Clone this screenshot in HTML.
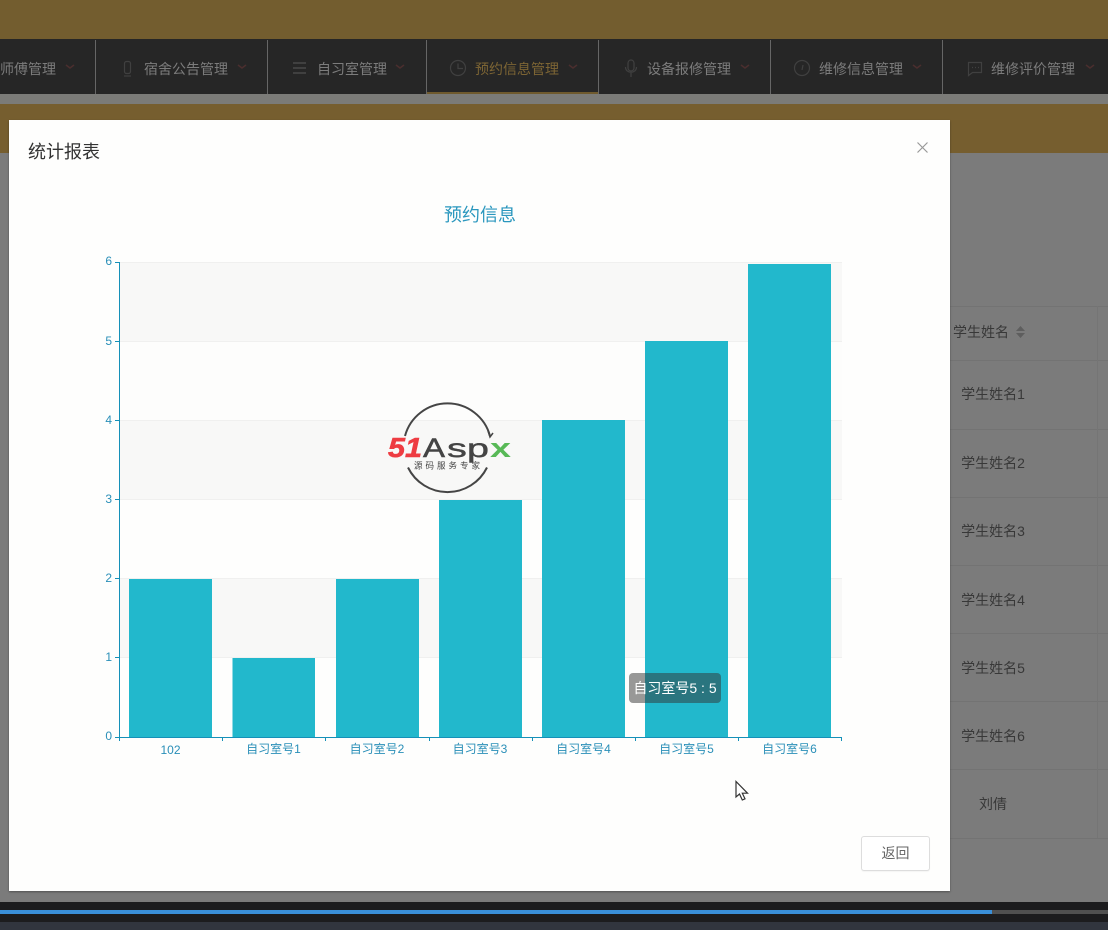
<!DOCTYPE html>
<html lang="zh">
<head>
<meta charset="utf-8">
<title>统计报表</title>
<style>
html,body{margin:0;padding:0;width:1108px;height:930px;overflow:hidden;background:#7b7b7b}
body{position:relative;font-family:"Liberation Sans","Noto Sans CJK SC",sans-serif}
.a{position:absolute}
.t{position:absolute;white-space:nowrap;line-height:20px}
.nav{color:#7c7c7c;font-size:14px;top:59px}
.cell{color:#383838;font-size:14px;left:943px;width:100px;text-align:center}
.hl{position:absolute;left:950px;right:0;height:1px;background:#737373}
</style>
</head>
<body>
<div class="a" style="left:0;top:0;width:1108px;height:39px;background:#735d2f"></div>
<div class="a" style="left:0;top:39px;width:1108px;height:55px;background:#262626"></div>
<div class="a" style="left:0;top:94px;width:1108px;height:10px;background:#7b7b78"></div>
<div class="a" style="left:0;top:104px;width:1108px;height:49px;background:#765e2f"></div>
<div class="a" style="left:0;top:902px;width:1108px;height:20px;background:#1c1c1e"></div>
<div class="a" style="left:0;top:910px;width:1108px;height:4px;background:#505050"></div>
<div class="a" style="left:0;top:910px;width:992px;height:4px;background:#3a8fd8"></div>
<div class="a" style="left:0;top:922px;width:1108px;height:8px;background:#31353e"></div>

<!-- nav separators -->
<div class="a" style="left:95px;top:40px;width:1px;height:54px;background:#666"></div>
<div class="a" style="left:267px;top:40px;width:1px;height:54px;background:#666"></div>
<div class="a" style="left:426px;top:40px;width:1px;height:54px;background:#666"></div>
<div class="a" style="left:598px;top:40px;width:1px;height:54px;background:#666"></div>
<div class="a" style="left:770px;top:40px;width:1px;height:54px;background:#666"></div>
<div class="a" style="left:942px;top:40px;width:1px;height:54px;background:#666"></div>
<div class="a" style="left:427px;top:92px;width:171px;height:2px;background:#6f5a2e"></div>

<div class="t nav" style="left:0">师傅管理</div>
<div class="t nav" style="left:144px">宿舍公告管理</div>
<div class="t nav" style="left:317px">自习室管理</div>
<div class="t nav" style="left:475px;color:#7d6534">预约信息管理</div>
<div class="t nav" style="left:647px">设备报修管理</div>
<div class="t nav" style="left:819px">维修信息管理</div>
<div class="t nav" style="left:991px">维修评价管理</div>

<svg class="a" style="left:0;top:39px" width="1108" height="55" viewBox="0 39 1108 55" fill="none">
  <g stroke="#4a2e2e" stroke-width="1.500">
    <path d="M66 65l4 3 4-3M238 65l4 3 4-3M396 65l4 3 4-3M569 65l4 3 4-3M741 65l4 3 4-3M913 65l4 3 4-3M1086 65l4 3 4-3"/>
  </g>
  <g stroke="#404040" stroke-width="1.200">
    <rect x="124.500" y="61.500" width="6" height="12" rx="2"/>
    <path d="M124 76h7"/>
    <path d="M293 63h13M293 68h13M293 73h13" stroke-width="2"/>
    <circle cx="458" cy="68" r="7.500"/>
    <path d="M458 63.500V68.500H463"/>
    <rect x="628" y="60" width="6" height="11" rx="3"/>
    <path d="M625.500 67c0 7 11 7 11 0M631 73v4"/>
    <circle cx="802" cy="68" r="7.500"/>
    <path d="M802 70l1-5"/>
    <path d="M968.500 62.500h13v10h-9l-4 3z"/>
    <path d="M972 67.500h1M975 67.500h1M978 67.500h1"/>
  </g>
</svg>

<!-- background table -->
<div class="hl" style="top:306px"></div>
<div class="hl" style="top:360px"></div>
<div class="hl" style="top:429px"></div>
<div class="hl" style="top:497px"></div>
<div class="hl" style="top:565px"></div>
<div class="hl" style="top:633px"></div>
<div class="hl" style="top:701px"></div>
<div class="hl" style="top:769px"></div>
<div class="hl" style="top:838px"></div>
<div class="a" style="left:1097px;top:306px;width:1px;height:532px;background:#757575"></div>
<div class="t" style="left:953px;top:322px;font-size:14px;color:#383838">学生姓名</div>
<svg class="a" style="left:1015px;top:325px" width="11" height="14"><path d="M1 6L5.500 1 10 6zM1 8L5.500 13 10 8z" fill="#5e5e5e"/></svg>
<div class="t cell" style="top:384px">学生姓名1</div>
<div class="t cell" style="top:453px">学生姓名2</div>
<div class="t cell" style="top:521px">学生姓名3</div>
<div class="t cell" style="top:590px">学生姓名4</div>
<div class="t cell" style="top:658px">学生姓名5</div>
<div class="t cell" style="top:726px">学生姓名6</div>
<div class="t cell" style="top:794px">刘倩</div>

<!-- modal -->
<div class="a" style="left:9px;top:120px;width:941px;height:771px;background:#fefefd;box-shadow:0 1px 2px rgba(0,0,0,.35)"></div>
<div class="t" style="left:28px;top:140px;font-size:18px;line-height:24px;color:#333">统计报表</div>
<svg class="a" style="left:916px;top:141px" width="13" height="13"><path d="M1.500 1.500l10 10M11.500 1.500l-10 10" stroke="#999" stroke-width="1.200" fill="none"/></svg>

<!-- chart -->
<svg class="a" style="left:0;top:0" width="1108" height="930" viewBox="0 0 1108 930">
  <g>
    <rect x="120" y="263" width="722" height="79" fill="#f8f8f7"/>
    <rect x="120" y="342" width="722" height="79" fill="#fdfdfc"/>
    <rect x="120" y="421" width="722" height="79" fill="#f8f8f7"/>
    <rect x="120" y="500" width="722" height="79" fill="#fefefd"/>
    <rect x="120" y="579" width="722" height="79" fill="#f8f8f7"/>
    <rect x="120" y="658" width="722" height="79" fill="#fefefd"/>
    <path d="M120 262.500H842M120 341.500H842M120 420.500H842M120 499.500H842M120 578.500H842M120 657.500H842" stroke="#f0f0ef" stroke-width="1"/>
  </g>
  <g fill="#22b8cc">
    <rect x="129" y="579" width="83" height="158"/>
    <rect x="232.500" y="658" width="82.500" height="79"/>
    <rect x="336" y="579" width="83" height="158"/>
    <rect x="439" y="500" width="83" height="237"/>
    <rect x="542" y="420" width="83" height="317"/>
    <rect x="645" y="341" width="83" height="396"/>
    <rect x="748" y="264" width="83" height="473"/>
  </g>
  <g stroke="#1590b8" stroke-width="1" fill="none">
    <path d="M119.500 262V737.500H842"/>
    <path d="M115 262.500h5M115 341.500h5M115 420.500h5M115 499.500h5M115 578.500h5M115 657.500h5M115 737.500h5"/>
    <path d="M119.500 737v4M222.500 737v4M325.500 737v4M429.500 737v4M532.500 737v4M635.500 737v4M738.500 737v4M841.500 737v4"/>
  </g>
  <g font-size="12" fill="#2a8fb8" text-anchor="end">
    <text x="112" y="265">6</text>
    <text x="112" y="345">5</text>
    <text x="112" y="424">4</text>
    <text x="112" y="503">3</text>
    <text x="112" y="582">2</text>
    <text x="112" y="661">1</text>
    <text x="112" y="740">0</text>
  </g>
  <g font-size="12" fill="#2a8fb8" text-anchor="middle">
    <text x="170.500" y="754">102</text>
    <text x="273.500" y="753">自习室号1</text>
    <text x="377" y="753">自习室号2</text>
    <text x="480" y="753">自习室号3</text>
    <text x="583.500" y="753">自习室号4</text>
    <text x="686.500" y="753">自习室号5</text>
    <text x="789.500" y="753">自习室号6</text>
  </g>
  <text x="480" y="221" font-size="18" fill="#2a97be" text-anchor="middle">预约信息</text>

  <!-- logo -->
  <g fill="none" stroke="#454545" stroke-width="2">
    <path d="M405 436A44 44 0 0 1 490 436"/>
    <path d="M487 467.500A44 44 0 0 1 408 467.500"/>
    <path d="M488 431l2 6 3-4" stroke-width="1.500"/>
  </g>
  <text x="388" y="457" font-size="28" font-weight="700" font-style="italic" fill="#ee3c42" stroke="#ee3c42" stroke-width=".6" textLength="34" lengthAdjust="spacingAndGlyphs">51</text>
  <text x="423" y="457" font-size="27" fill="#444" stroke="#444" stroke-width=".5" textLength="22" lengthAdjust="spacingAndGlyphs">A</text>
  <text x="447" y="457" font-size="26" fill="#444" stroke="#444" stroke-width=".4" textLength="42" lengthAdjust="spacingAndGlyphs">sp</text>
  <text x="490" y="457" font-size="27" font-weight="700" fill="#58b957" textLength="21" lengthAdjust="spacingAndGlyphs">x</text>
  <text x="414" y="468.500" font-size="8.500" fill="#444" textLength="66">源码服务专家</text>

  <!-- tooltip -->
  <rect x="629" y="673" width="92" height="30" rx="4" fill="rgba(50,50,50,.5)"/>
  <text x="675" y="693" font-size="14" fill="#fff" text-anchor="middle">自习室号5 : 5</text>

  <!-- cursor -->
  <path d="M736 781.500V797l3.500-3 2.800 6 2.700-1.200-2.700-5.600H747.500z" fill="#fff" stroke="#333" stroke-width="1.200"/>
</svg>

<!-- button -->
<div class="a" style="left:861px;top:836px;width:67px;height:33px;border:1px solid #ddd;border-radius:3px;background:#fff;box-shadow:0 1px 1px rgba(0,0,0,.04);text-align:center;line-height:33px;font-size:14px;color:#666">返回</div>
</body>
</html>
